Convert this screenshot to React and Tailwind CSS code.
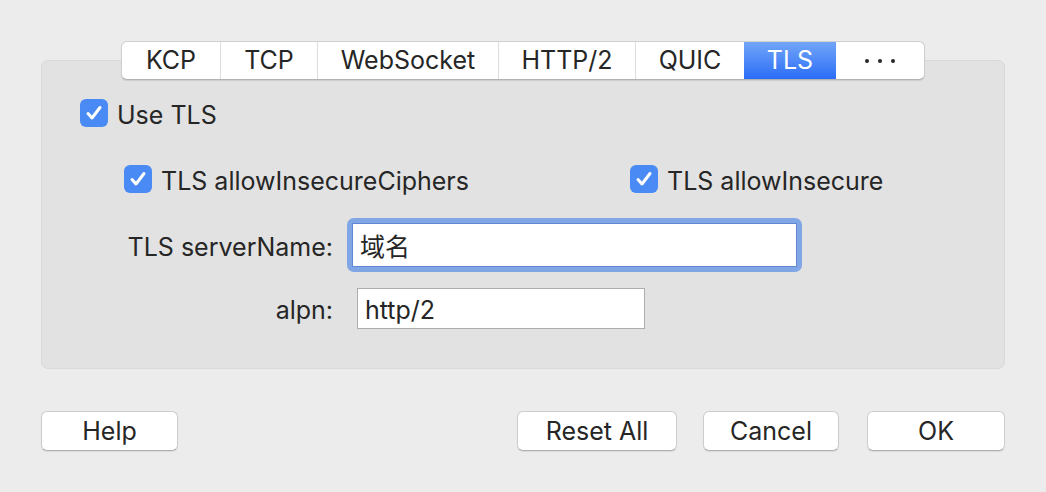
import React from "react";

const tabs = [
  { label: "KCP", w: "w-[98px]" },
  { label: "TCP", w: "w-[97px]" },
  { label: "WebSocket", w: "w-[181px]" },
  { label: "HTTP/2", w: "w-[137px]" },
  { label: "QUIC", w: "w-[109px]" },
  { label: "TLS", w: "w-[92px]", active: true },
];

function Check({ label }) {
  return (
    <div className="flex items-center gap-[9px]">
      <div className="w-[28px] h-[28px] rounded-[6px] bg-[#4a8af5] flex items-center justify-center">
        <svg width="20" height="20" viewBox="0 0 20 20" fill="none">
          <path d="M4 10.5 L8 15 L16 4.5" stroke="white" strokeWidth="3" strokeLinecap="round" strokeLinejoin="round" />
        </svg>
      </div>
      <span className="relative top-[2px]">{label}</span>
    </div>
  );
}

function Button({ label, w }) {
  return (
    <button className={`${w} h-[40px] bg-white rounded-[6px] border border-[#cdcdcd] border-b-[#b0b0b0] shadow-[0_1px_1px_rgba(0,0,0,0.08)] flex items-center justify-center text-[#262626]`}>
      {label}
    </button>
  );
}

export default function App() {
  return (
    <div
      className="w-[1046px] h-[492px] bg-[#ececec] pt-[41px] px-[41px] flex flex-col text-[25px] text-[#262626] leading-none"
      style={{ fontFamily: 'Inter, "Noto Sans CJK SC", sans-serif' }}
    >
      {/* Tabs */}
      <div className="flex justify-center relative z-10 mb-[-20px]">
        <div className="flex h-[39px] bg-white rounded-[6px] border border-[#cfcfcf] border-b-[#b3b3b3] shadow-[0_1px_1px_rgba(0,0,0,0.1)] overflow-hidden">
          {tabs.map((t, i) => (
            <div
              key={t.label}
              className={`${t.w} flex items-center justify-center ${
                t.active
                  ? "bg-gradient-to-b from-[#72a5f8] to-[#2a6cf6] text-white"
                  : "text-[#262626]"
              } ${i > 0 && !t.active && !tabs[i - 1].active ? "border-l border-[#dedede]" : ""}`}
            >
              {t.label}
            </div>
          ))}
          <div className="w-[88px] flex items-center justify-center gap-[9px]">
            <div className="w-[4px] h-[4px] rounded-full bg-[#262626]" />
            <div className="w-[4px] h-[4px] rounded-full bg-[#262626]" />
            <div className="w-[4px] h-[4px] rounded-full bg-[#262626]" />
          </div>
        </div>
      </div>

      {/* Panel */}
      <div className="h-[309px] bg-[#e2e2e2] border border-[#d9d9d9] rounded-[7px] flex flex-col">
        <div className="mt-[38px] ml-[38px]">
          <Check label="Use TLS" />
        </div>
        <div className="mt-[38px] ml-[82px] flex">
          <div className="w-[506px]">
            <Check label="TLS allowInsecureCiphers" />
          </div>
          <Check label="TLS allowInsecure" />
        </div>
        <div className="mt-[25px] flex items-center">
          <div className="w-[291px] text-right relative top-[2px]">TLS serverName:</div>
          <div className="ml-[14px] w-[455px] h-[54px] bg-[#80a6e6] rounded-[7px] p-[5px]">
            <div className="w-full h-full bg-white border border-[#5f87d3] flex items-center pl-[7px]">
              <span className="relative top-[2px]">域名</span>
            </div>
          </div>
        </div>
        <div className="mt-[16px] flex items-center">
          <div className="w-[291px] text-right relative top-[2px]">alpn:</div>
          <div className="ml-[24px] w-[288px] h-[41px] bg-white border border-[#adadad] flex items-center pl-[7px]">
            <span className="relative top-[2px]">http/2</span>
          </div>
        </div>
      </div>

      {/* Buttons */}
      <div className="mt-[42px] flex">
        <Button label="Help" w="w-[137px]" />
        <div className="flex-1" />
        <Button label="Reset All" w="w-[160px]" />
        <div className="w-[26px]" />
        <Button label="Cancel" w="w-[136px]" />
        <div className="w-[28px]" />
        <Button label="OK" w="w-[138px]" />
      </div>
    </div>
  );
}
